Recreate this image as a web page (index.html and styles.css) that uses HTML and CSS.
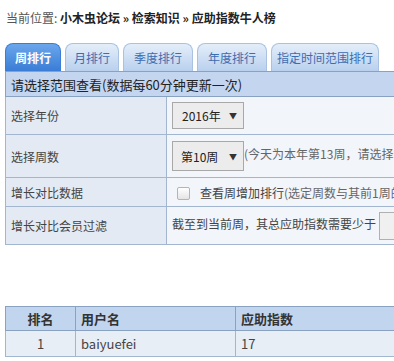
FILE: index.html
```html
<!DOCTYPE html>
<html lang="zh-CN">
<head>
    <meta charset="UTF-8">
    <title>应助指数牛人榜</title>
    <link rel="stylesheet" href="styles.css">
</head>
<body>
    <div class="page">
        <div class="crumb">
            <span class="crumb-label">当前位置:</span>
            <b>小木虫论坛 » 检索知识 » 应助指数牛人榜</b>
        </div>

        <ul class="tabs">
            <li class="active">周排行</li>
            <li>月排行</li>
            <li class="wide">季度排行</li>
            <li class="wide">年度排行</li>
            <li class="long">指定时间范围排行</li>
        </ul>

        <table class="filter">
            <tr>
                <th colspan="2">请选择范围查看(数据每60分钟更新一次)</th>
            </tr>
            <tr class="row-year">
                <td class="label">选择年份</td>
                <td class="value"><span class="select">2016年 <i>▼</i></span></td>
            </tr>
            <tr class="row-week">
                <td class="label">选择周数</td>
                <td class="value"><span class="select">第10周 <i>▼</i></span><span class="hint">(今天为本年第13周，请选择第1至第13周)</span></td>
            </tr>
            <tr class="row-check">
                <td class="label">增长对比数据</td>
                <td class="value"><span class="check"></span>查看周增加排行<span class="hint">(选定周数与其前1周的对比数据)</span></td>
            </tr>
            <tr class="row-filter">
                <td class="label">增长对比会员过滤</td>
                <td class="value">截至到当前周，其总应助指数需要少于 <span class="box"></span></td>
            </tr>
        </table>

        <table class="rank">
            <tr>
                <th class="col-no">排名</th>
                <th class="col-user">用户名</th>
                <th class="col-score">应助指数</th>
            </tr>
            <tr>
                <td class="col-no">1</td>
                <td>baiyuefei</td>
                <td>17</td>
            </tr>
        </table>
    </div>
</body>
</html>
```

FILE: styles.css
```css
/* Global */
html, body {
    overflow: hidden;
}

body {
    margin: 0;
    font-family: "Noto Sans CJK SC", "Liberation Sans", sans-serif;
    font-size: 12px;
    color: #333;
    background: #fff;
}

.page {
    width: 600px;
    padding: 0 0 0 5px;
}

/* Breadcrumb */
.crumb {
    height: 36px;
    line-height: 36px;
    padding-left: 1px;
    color: #555;
}

.crumb b {
    color: #222;
}

/* Tabs */
.tabs {
    list-style: none;
    margin: 7px 0 0;
    padding: 0;
    display: flex;
    gap: 4px;
    height: 28px;
}

.tabs li {
    padding: 0 8px;
    line-height: 28px;
    font-size: 12px;
    color: #3d6cb0;
    background: linear-gradient(#e4eefa, #b9d0ed);
    border: 1px solid #a9c2e2;
    border-bottom: none;
    border-radius: 8px 8px 0 0;
}

.tabs li.wide {
    padding: 0 10px;
}

.tabs li.long {
    padding: 0 5px;
}

.tabs li.active {
    color: #fff;
    font-weight: bold;
    padding: 0 9px;
    background: linear-gradient(#6aa6ec, #3a7dd6);
    border-color: #3a7dd6;
}

/* Filter table */
table {
    border-collapse: collapse;
}

.filter {
    width: 590px;
    border: 1px solid #8aa2c2;
}

.filter th {
    height: 24px;
    padding: 0 5px;
    text-align: left;
    font-size: 13px;
    font-weight: normal;
    color: #222;
    background: #c4d6ef;
    border: 1px solid #8aa2c2;
}

.filter td {
    border: 1px solid #a3b6d0;
    padding: 0 5px;
}

.filter td.label {
    width: 150px;
    background: #e3eaf4;
    color: #444;
}

.filter td.value {
    background: #f2f5f9;
    color: #444;
    white-space: nowrap;
}

.row-year td {
    height: 37px;
}

.row-week td {
    height: 42px;
}

.row-check td {
    height: 28px;
}

.row-filter td {
    height: 37px;
}

.select {
    display: inline-flex;
    align-items: center;
    justify-content: space-between;
    box-sizing: border-box;
    width: 72px;
    height: 27px;
    padding: 0 6px 0 9px;
    border: 1px solid #a8a8a8;
    background: #ececec;
    color: #222;
    font-size: 12px;
    vertical-align: middle;
}

.row-week .select {
    height: 30px;
    padding-left: 8px;
}

.select i {
    font-style: normal;
    font-size: 8px;
    color: #333;
}

.hint {
    color: #666;
}

.check {
    display: inline-block;
    width: 11px;
    height: 11px;
    margin: 0 10px 0 5px;
    border: 1px solid #b4b4b4;
    border-radius: 2px;
    background: linear-gradient(#fff, #e4e4e4);
    vertical-align: -2px;
}

.box {
    display: inline-block;
    width: 60px;
    height: 26px;
    border: 1px solid #b0b0b0;
    background: #f0f0f0;
    vertical-align: middle;
}

/* Ranking table */
.rank {
    width: 590px;
    margin-top: 61px;
    border: 1px solid #8aa2c2;
}

.rank th {
    height: 23px;
    padding: 0 5px;
    text-align: left;
    font-size: 13px;
    color: #333;
    background: #c2d5ef;
    border: 1px solid #8aa2c2;
}

.rank td {
    height: 25px;
    padding: 0 5px;
    color: #444;
    font-size: 13px;
    background: #e8eef6;
    border: 1px solid #a3b6d0;
}

.rank .col-no {
    width: 59px;
    text-align: center;
}

.rank .col-user {
    width: 149px;
}
```
